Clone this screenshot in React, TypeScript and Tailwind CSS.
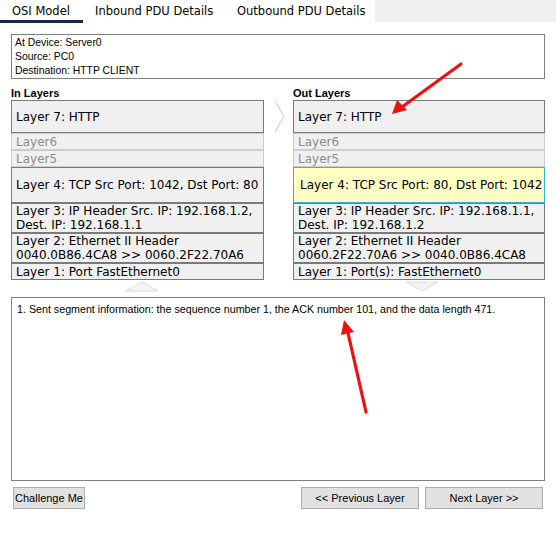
import React from 'react';

type Layer = { label: string; lines: string[]; h: string; kind: 'on' | 'off' | 'hl' };

const IN_LAYERS: Layer[] = [
  { label: 'l7', lines: ['Layer 7: HTTP'], h: 'h-[33px]', kind: 'on' },
  { label: 'l6', lines: ['Layer6'], h: 'h-[17px]', kind: 'off' },
  { label: 'l5', lines: ['Layer5'], h: 'h-[17px]', kind: 'off' },
  { label: 'l4', lines: ['Layer 4: TCP Src Port: 1042, Dst Port: 80'], h: 'h-[36px]', kind: 'on' },
  { label: 'l3', lines: ['Layer 3: IP Header Src. IP: 192.168.1.2,', 'Dest. IP: 192.168.1.1'], h: 'h-[30px]', kind: 'on' },
  { label: 'l2', lines: ['Layer 2: Ethernet II Header', '0040.0B86.4CA8 >> 0060.2F22.70A6'], h: 'h-[30px]', kind: 'on' },
  { label: 'l1', lines: ['Layer 1: Port FastEthernet0'], h: 'h-[17px]', kind: 'on' },
];

const OUT_LAYERS: Layer[] = [
  { label: 'l7', lines: ['Layer 7: HTTP'], h: 'h-[33px]', kind: 'on' },
  { label: 'l6', lines: ['Layer6'], h: 'h-[17px]', kind: 'off' },
  { label: 'l5', lines: ['Layer5'], h: 'h-[17px]', kind: 'off' },
  { label: 'l4', lines: ['Layer 4: TCP Src Port: 80, Dst Port: 1042'], h: 'h-[36px]', kind: 'hl' },
  { label: 'l3', lines: ['Layer 3: IP Header Src. IP: 192.168.1.1,', 'Dest. IP: 192.168.1.2'], h: 'h-[30px]', kind: 'on' },
  { label: 'l2', lines: ['Layer 2: Ethernet II Header', '0060.2F22.70A6 >> 0040.0B86.4CA8'], h: 'h-[30px]', kind: 'on' },
  { label: 'l1', lines: ['Layer 1: Port(s): FastEthernet0'], h: 'h-[17px]', kind: 'on' },
];

const tahoma = "font-['DejaVu_Sans',sans-serif]";
const arial = "font-['Liberation_Sans',Arial,sans-serif]";

function LayerColumn({ title, layers }: { title: string; layers: Layer[] }) {
  return (
    <div className="flex flex-col">
      <div className={`${arial} text-[11px] font-bold text-black leading-[14px] h-[14px]`}>{title}</div>
      {layers.map((l) => (
        <div
          key={l.label}
          className={`${l.h} flex flex-col justify-center px-[4px] border ${tahoma} text-[12px] leading-[14px] overflow-hidden ${
            l.kind === 'off'
              ? 'border-[#cccccc] bg-[#f0f0f0] text-[#8c8c8c]'
              : l.kind === 'hl'
                ? 'border-[#30b4e6] bg-[#ffffc4] text-black px-[6px]'
                : 'border-[#7a7a7a] bg-[#f0f0f0] text-black'
          }`}
        >
          {l.lines.map((t) => (
            <div key={t} className="whitespace-nowrap">{t}</div>
          ))}
        </div>
      ))}
    </div>
  );
}

export default function App() {
  return (
    <div className="relative w-[556px] h-[537px] bg-white overflow-hidden">
      {/* tabs */}
      <div className={`flex h-[23px] ${tahoma} text-[11.5px] text-black`}>
        <div className="w-[83px] flex flex-col">
          <div className="flex-1 pl-[12px] pt-[4px] leading-[14px]">OSI Model</div>
          <div className="h-[3px] bg-[#0f2a4d]" />
        </div>
        <div className="pl-[12px] pt-[4px] w-[142px] leading-[14px]">Inbound PDU Details</div>
        <div className="pl-[12px] pt-[4px] w-[150px] leading-[14px]">Outbound PDU Details</div>
        <div className="flex-1 h-[22px] bg-[#f0f0f0]" />
      </div>

      <div className="px-[11px] pt-[11px] flex flex-col">
        {/* device info */}
        <div className={`h-[45px] border border-[#808080] px-[3px] pt-[1px] ${arial} text-[10.4px] leading-[14px] text-black`}>
          <div>At Device: Server0</div>
          <div>Source: PC0</div>
          <div>Destination: HTTP CLIENT</div>
        </div>

        {/* layers */}
        <div className="mt-[7px] flex">
          <div className="w-[253px] flex flex-col">
            <LayerColumn title="In Layers" layers={IN_LAYERS} />
            <div className="flex justify-center pt-[1px]">
              <svg width="34" height="11" viewBox="0 0 34 11" className="ml-[9px]">
                <path d="M1 10 L17 1 L33 10 Z" fill="#f4f4f4" stroke="#dcdcdc" strokeWidth="1" />
              </svg>
            </div>
          </div>
          <div className="w-[29px] flex justify-center pt-[14px]">
            <svg width="12" height="33" viewBox="0 0 12 33" className="ml-[2px]">
              <path d="M1 1 L10 16.5 L1 32" fill="none" stroke="#d4d4d4" strokeWidth="1.3" />
            </svg>
          </div>
          <div className="w-[252px] flex flex-col">
            <LayerColumn title="Out Layers" layers={OUT_LAYERS} />
            <div className="flex justify-center pt-[1px]">
              <svg width="34" height="11" viewBox="0 0 34 11" className="ml-[6px]">
                <path d="M1 1 L17 10 L33 1 Z" fill="#f4f4f4" stroke="#dcdcdc" strokeWidth="1" />
              </svg>
            </div>
          </div>
        </div>

        {/* message */}
        <div className={`mt-[5px] h-[184px] border border-[#808080] px-[5px] pt-[4px] ${arial} text-[10.7px] leading-[14px] text-black`}>
          1. Sent segment information: the sequence number 1, the ACK number 101, and the data length 471.
        </div>

        {/* buttons */}
        <div className={`mt-[6px] flex ${arial} text-[11px] text-black whitespace-nowrap`}>
          <button className="ml-[2px] h-[22px] w-[72px] border border-[#adadad] bg-[#e1e1e1]">Challenge Me</button>
          <div className="flex-1" />
          <button className="h-[22px] w-[118px] border border-[#adadad] bg-[#e1e1e1]">&lt;&lt; Previous Layer</button>
          <button className="ml-[6px] mr-[2px] h-[22px] w-[118px] border border-[#adadad] bg-[#e1e1e1]">Next Layer &gt;&gt;</button>
        </div>
      </div>

      {/* annotation arrows */}
      <svg className="absolute inset-0 pointer-events-none" width="556" height="537" viewBox="0 0 556 537">
        <line x1="461" y1="64" x2="402" y2="107" stroke="#f01010" strokeWidth="3.2" strokeLinecap="round" />
        <path d="M392 114 L397 100 L407 110 Z" fill="#f01010" />
        <line x1="366" y1="412" x2="348" y2="333" stroke="#f01010" strokeWidth="3.2" strokeLinecap="round" />
        <path d="M344 320 L341 335 L354 332 Z" fill="#f01010" />
      </svg>
    </div>
  );
}
